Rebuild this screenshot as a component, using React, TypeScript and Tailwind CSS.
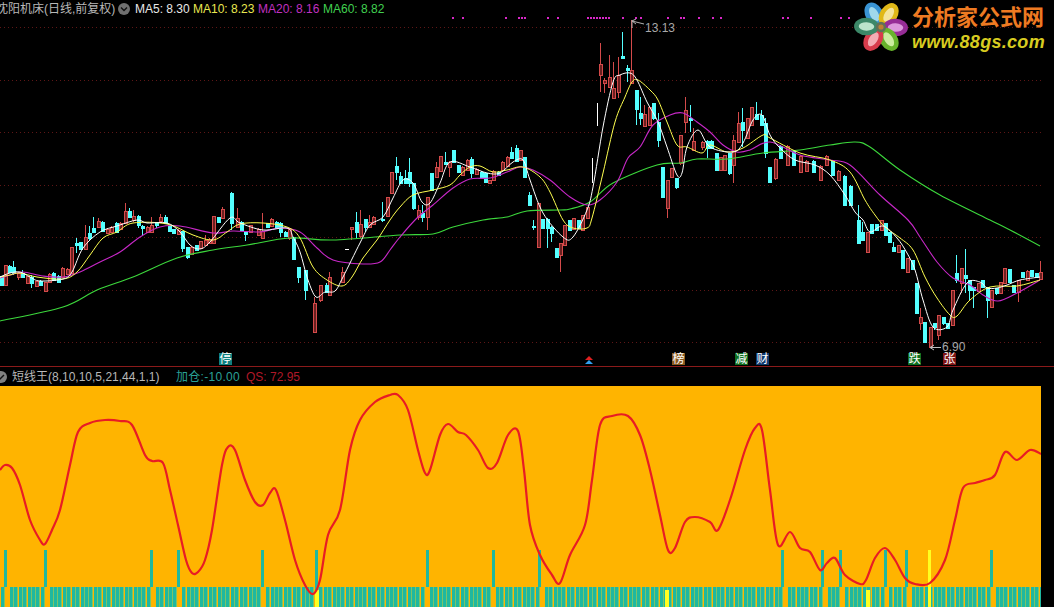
type Pt = [number, number]
type Candle = [number, number, number, number, number]

// catmull-rom through the hand read points, keeps the curves from looking like polylines
const toPath = (pts: Pt[]) => {
  let d = `M${pts[0][0]} ${pts[0][1]}`
  for (let i = 0; i < pts.length - 1; i++) {
    const p0 = pts[i - 1] ?? pts[i]
    const p1 = pts[i]
    const p2 = pts[i + 1]
    const p3 = pts[i + 2] ?? p2
    const c1x = p1[0] + (p2[0] - p0[0]) / 6
    const c1y = p1[1] + (p2[1] - p0[1]) / 6
    const c2x = p2[0] - (p3[0] - p1[0]) / 6
    const c2y = p2[1] - (p3[1] - p1[1]) / 6
    d += ` C${c1x.toFixed(1)} ${c1y.toFixed(1)} ${c2x.toFixed(1)} ${c2y.toFixed(1)} ${p2[0]} ${p2[1]}`
  }
  return d
}

const ma5: Pt[] = [[0,277],[10,273],[20,272],[30,277],[40,281],[63,279],[72,272],[83,248],[100,232],[117,226],[137,220],[147,223],[167,223],[180,232],[190,245],[200,249],[210,242],[230,218],[240,223],[263,230],[287,228],[293,237],[300,252],[308,280],[316,297],[325,292],[335,291],[343,277],[360,243],[370,225],[383,217],[393,198],[403,180],[413,183],[422,202],[430,203],[440,183],[450,162],[470,167],[487,173],[500,173],[513,162],[523,160],[530,180],[543,213],[563,237],[573,237],[587,210],[593,187],[603,127],[613,82],[620,75],[630,73],[637,80],[647,102],[658,122],[667,147],[677,175],[682,173],[687,147],[698,130],[710,147],[733,152],[743,143],[753,120],[762,115],[770,135],[780,148],[795,160],[815,165],[830,175],[845,195],[855,212],[863,220],[870,232],[883,226],[897,238],[907,253],[915,270],[923,300],[933,327],[947,327],[953,310],[967,283],[980,282],[987,288],[997,288],[1007,285],[1020,280],[1040,277]]
const ma10: Pt[] = [[0,277],[10,275],[20,273],[37,277],[63,279],[77,272],[90,255],[103,238],[117,232],[133,223],[167,224],[193,235],[213,240],[227,232],[240,224],[263,223],[287,227],[300,238],[313,267],[327,280],[342,286],[352,277],[363,258],[377,240],[390,220],[400,207],[413,195],[433,190],[450,185],[460,175],[470,167],[480,166],[493,172],[507,170],[523,167],[540,177],[550,192],[563,220],[573,228],[587,228],[592,218],[603,173],[615,122],[625,97],[632,82],[638,80],[650,90],[658,100],[667,122],[677,145],[687,147],[702,153],[710,145],[727,152],[743,148],[763,135],[770,138],[800,153],[830,160],[850,172],[865,200],[875,215],[885,227],[900,238],[913,250],[925,277],[937,298],[950,315],[957,316],[970,300],[990,287],[1017,286],[1040,280]]
const ma20: Pt[] = [[0,278],[10,275],[23,272],[43,276],[63,277],[80,272],[100,262],[120,252],[140,237],[160,227],[180,226],[213,233],[233,231],[260,232],[280,228],[300,232],[317,248],[333,260],[363,264],[380,262],[390,250],[400,237],[417,218],[433,205],[453,188],[470,179],[490,178],[507,172],[520,167],[533,170],[550,180],[570,197],[587,205],[600,200],[617,182],[628,158],[640,147],[653,125],[670,115],[683,113],[697,122],[710,132],[723,145],[737,152],[750,150],[770,142],[800,155],[830,160],[850,165],[880,195],[908,220],[920,237],[937,262],[953,278],[970,285],[983,295],[998,301],[1017,293],[1040,280]]
const ma60: Pt[] = [[0,321],[63,307],[97,290],[133,277],[177,258],[213,250],[247,245],[290,238],[333,240],[400,235],[433,234],[453,227],[483,220],[507,217],[527,211],[560,210],[570,209],[590,202],[613,183],[657,165],[680,163],[697,159],[727,159],[763,153],[800,150],[830,145],[855,142],[870,147],[900,170],[940,195],[990,220],[1010,230],[1040,246]]

// x, high, body top, body bottom, low
const redCandles: Candle[] = [[5,265,265,285,285],[18,272,273,277,280],[27,276,276,283,284],[36,281,281,286,286],[45,282,282,291,292],[49,273,274,282,283],[62,267,268,277,278],[67,268,269,274,275],[71,247,247,273,274],[85,225,237,249,250],[98,218,221,227,228],[107,228,229,233,234],[111,226,227,232,233],[120,222,223,229,230],[125,203,211,223,224],[133,210,216,220,222],[147,226,227,232,233],[151,217,225,232,233],[160,214,217,221,222],[178,229,230,234,235],[191,246,247,254,255],[200,241,241,248,249],[205,235,240,245,246],[209,238,239,243,244],[213,216,216,243,244],[222,207,209,218,219],[237,208,218,227,228],[250,225,225,232,233],[258,228,229,235,236],[262,213,231,238,239],[271,218,219,226,227],[289,228,229,238,240],[314,297,303,332,332],[320,285,285,300,302],[329,272,277,295,296],[342,267,272,282,283],[351,227,227,229,240],[360,210,224,236,238],[369,215,222,227,228],[373,216,217,224,225],[387,197,197,216,217],[391,172,172,193,194],[418,205,210,217,220],[427,197,197,217,230],[436,162,167,177,178],[440,156,156,171,172],[449,161,162,167,177],[462,166,167,175,176],[467,159,160,170,171],[476,168,169,174,175],[489,180,180,183,184],[493,170,171,180,181],[502,161,162,170,171],[507,156,157,166,167],[520,150,150,160,161],[538,203,203,247,248],[560,243,243,255,272],[564,225,225,245,246],[573,218,218,229,230],[582,215,215,230,231],[587,207,207,218,219],[600,43,64,75,92],[604,78,80,83,93],[609,55,77,87,88],[613,62,88,98,99],[618,57,75,92,98],[631,20,70,83,84],[644,105,114,126,127],[649,107,107,125,126],[667,180,180,208,218],[671,168,168,177,178],[680,135,135,163,165],[685,97,110,122,133],[693,128,141,150,151],[702,141,142,147,150],[720,157,157,170,171],[724,155,155,170,171],[733,135,140,165,183],[738,112,123,142,143],[747,118,118,138,139],[751,107,107,125,126],[775,158,159,178,180],[787,145,146,165,166],[800,155,156,172,173],[806,160,161,171,172],[820,165,166,180,181],[826,155,156,165,166],[838,170,171,180,181],[867,232,232,252,253],[881,220,220,230,231],[898,245,245,252,253],[907,258,258,272,273],[920,308,317,323,330],[930,327,327,347,348],[938,315,315,335,340],[952,290,290,325,326],[961,268,268,283,293],[978,283,283,291,292],[991,290,290,307,308],[1000,282,282,293,294],[1004,268,268,283,284],[1018,280,280,292,302],[1027,270,271,280,281],[1040,261,272,279,280]]
const cyanCandles: Candle[] = [[1,276,276,285,286],[9,265,266,272,273],[13,261,267,273,275],[22,270,273,277,278],[31,275,277,283,288],[40,280,281,285,286],[53,272,273,280,281],[58,275,276,282,283],[76,238,243,245,253],[80,242,242,249,250],[89,226,233,238,240],[93,217,228,232,232],[102,221,222,231,232],[116,222,223,232,233],[129,208,211,217,218],[138,215,216,225,228],[142,225,226,228,236],[156,222,222,225,228],[165,215,217,223,224],[169,226,226,231,232],[173,229,229,233,234],[182,231,231,248,252],[187,247,247,257,259],[196,245,245,250,251],[218,217,217,222,223],[231,192,193,223,230],[241,221,222,230,231],[245,231,231,234,241],[267,223,223,227,228],[276,221,222,228,229],[280,222,223,232,237],[285,231,232,236,237],[293,237,237,259,260],[298,267,267,277,283],[305,270,270,290,300],[326,283,285,292,293],[356,212,222,232,238],[365,219,219,227,232],[382,202,219,220,222],[396,157,166,172,180],[400,172,176,183,184],[405,170,178,183,184],[409,158,172,183,187],[413,183,183,208,210],[422,205,213,217,222],[431,173,173,190,191],[445,152,162,164,165],[453,150,150,162,163],[458,165,165,172,173],[471,157,159,173,178],[481,171,172,178,179],[485,173,173,182,183],[498,171,172,175,176],[511,147,152,158,159],[516,145,148,161,162],[524,157,157,177,178],[529,192,195,205,206],[533,220,226,227,230],[542,219,219,228,229],[547,218,219,228,248],[551,226,227,233,242],[556,248,248,257,258],[569,220,220,230,231],[578,220,220,228,229],[622,32,56,58,59],[627,65,68,70,82],[636,90,90,109,125],[640,97,113,118,125],[653,103,103,118,120],[658,113,122,140,147],[662,167,167,197,198],[676,178,178,187,189],[690,105,118,120,132],[707,140,141,148,158],[711,140,141,148,149],[716,153,153,170,171],[729,153,153,173,175],[742,108,122,130,147],[756,102,114,119,120],[761,110,115,125,126],[765,118,123,153,158],[769,167,167,182,183],[780,145,146,158,159],[793,150,151,165,166],[813,160,161,172,173],[832,160,161,175,176],[844,175,176,205,206],[850,185,186,205,206],[858,205,220,243,244],[862,222,232,240,241],[871,224,224,233,234],[876,224,224,230,231],[885,223,223,235,236],[889,232,232,242,243],[893,242,247,251,252],[902,250,250,268,269],[912,260,260,269,270],[916,283,283,313,314],[924,322,322,342,343],[934,323,323,327,330],[943,317,317,323,325],[947,323,323,328,329],[956,255,273,280,283],[965,249,275,278,293],[969,280,280,290,300],[973,287,287,290,308],[982,280,280,287,288],[987,287,287,300,318],[996,288,288,293,295],[1009,269,269,282,283],[1013,285,285,292,293],[1022,272,272,277,278],[1031,270,270,276,277],[1036,273,273,277,278]]

const qsCurve: Pt[] = [[0,470],[5,465],[12,468],[20,485],[30,520],[40,540],[45,544],[52,530],[60,510],[70,465],[78,432],[90,423],[105,420],[120,421],[132,425],[145,455],[152,461],[163,463],[170,490],[178,525],[186,560],[192,573],[198,572],[205,560],[212,530],[222,465],[228,447],[235,450],[245,480],[255,502],[263,505],[270,493],[276,490],[285,520],[295,560],[305,585],[313,594],[320,580],[328,535],[340,510],[350,450],[360,420],[375,402],[390,395],[398,395],[408,410],[418,450],[425,473],[430,470],[440,435],[448,424],[458,432],[466,435],[478,450],[488,468],[497,463],[508,435],[518,431],[524,470],[530,525],[540,555],[552,575],[560,583],[570,555],[585,525],[592,480],[600,425],[612,416],[628,416],[640,435],[650,470],[660,515],[668,550],[675,548],[685,522],[695,517],[710,522],[718,530],[730,500],[745,450],[755,428],[762,430],[770,490],[778,545],[790,532],[800,548],[810,552],[820,570],[827,563],[835,558],[845,575],[860,584],[866,580],[875,558],[885,548],[895,560],[905,578],[915,584],[930,583],[945,560],[955,520],[963,488],[975,483],[985,480],[995,475],[1005,452],[1017,460],[1030,450],[1041,454]]

const gridLines = [27, 80, 132, 185, 237, 290, 342]
const signalDots = [452, 462, 505, 518, 521, 524, 547, 557, 587, 590, 593, 596, 599, 602, 605, 608, 622, 635, 640, 667, 680, 683, 698, 712, 720, 782, 787, 810, 840, 848]
const tallBars = [5, 45, 151, 178, 262, 316, 427, 493, 539, 782, 822, 840, 885, 906, 991]
const yellowBars = [316, 666, 867]
const shortBars = Array.from({ length: 236 }, (_, i) => Math.round(1 + i * 4.42)).filter(
  (x) => !tallBars.some((g) => g !== 316 && Math.abs(g - x) < 3),
)

function CandleMark({ c, color, fill }: { c: Candle; color: string; fill: string }) {
  const [x, hi, top, bot, lo] = c
  return (
    <g>
      <line x1={x + 0.5} x2={x + 0.5} y1={hi} y2={lo} stroke={color} />
      <rect
        x={x - 1}
        y={top + 0.5}
        width={3}
        height={Math.max(bot - top, 1)}
        fill={fill}
        stroke={color}
        shapeRendering="crispEdges"
      />
    </g>
  )
}

function PriceChart() {
  return (
    <svg width={1054} height={366} viewBox="0 0 1054 366" className="block">
      {gridLines.map((y) => (
        <line key={y} x1={0} x2={1041} y1={y + 0.5} y2={y + 0.5} stroke="#5e1616" strokeDasharray="1 3" />
      ))}
      {signalDots.map((x) => (
        <rect key={x} x={x} y={17} width={2} height={2} fill="#d828c8" />
      ))}
      {redCandles.map((c) => (
        <CandleMark key={c[0]} c={c} color="#d44a4a" fill="#6a2020" />
      ))}
      {cyanCandles.map((c) => (
        <CandleMark key={c[0]} c={c} color="#54ffff" fill="#54ffff" />
      ))}
      <line x1={597.5} x2={597.5} y1={103} y2={126} stroke="#fff" />
      <line x1={592.5} x2={592.5} y1={158} y2={183} stroke="#fff" />
      <line x1={345} x2={349} y1={249.5} y2={249.5} stroke="#fff" />
      <path d={toPath(ma60)} fill="none" stroke="#3cd83c" strokeWidth={1.1} />
      <path d={toPath(ma20)} fill="none" stroke="#c828c8" strokeWidth={1.1} />
      <path d={toPath(ma10)} fill="none" stroke="#ffff50" strokeWidth={1} />
      <path d={toPath(ma5)} fill="none" stroke="#ffffff" strokeWidth={1} />
      <path d="M632 20 L632 28 M632 21 L644 24 M632 21 L636 19 M632 21 L636 24" fill="none" stroke="#b0b0b0" />
      <path d="M930 347.5 H941 M930 347.5 L934 345 M930 347.5 L934 350" fill="none" stroke="#c0c0c0" />
      <path d="M589 356 L593 360 H585 Z" fill="#e02020" />
      <path d="M589 360 L593 364 H585 Z" fill="#30a0f0" />
    </svg>
  )
}

function Logo() {
  const petals = [
    { a: -28, c: "#3a94d4", i: "#a0d8ec" },
    { a: 32, c: "#e0b818", i: "#f4e49c" },
    { a: 92, c: "#962c96", i: "#dc98dc" },
    { a: 148, c: "#68b42c", i: "#cceca0" },
    { a: 212, c: "#d83c4c", i: "#f4acb4" },
    { a: 272, c: "#3c8868", i: "#bce4cc" },
  ]
  return (
    <div className="absolute left-[853px] top-[1px] flex items-center gap-[3px]">
      <svg width={56} height={52} viewBox="-27 -25 54 50">
        {petals.map((p) => (
          <g key={p.a} transform={`rotate(${p.a})`}>
            <ellipse cx={0} cy={-14} rx={8.5} ry={12} fill={p.c} />
            <ellipse cx={0} cy={-14} rx={4} ry={7.5} fill={p.i} />
          </g>
        ))}
        <circle r={5} fill="#607058" />
        <circle r={2.5} fill="#c08030" />
      </svg>
      <div className="flex flex-col gap-[2px] mt-[1px]">
        <span className="text-[22px] leading-[26px] font-bold text-[#ee7a22] whitespace-nowrap">分析家公式网</span>
        <span className="text-[18px] leading-[18px] font-bold italic tracking-[0.3px] text-[#d8cc20] whitespace-nowrap">
          www.88gs.com
        </span>
      </div>
    </div>
  )
}

function Badge({ text, bg, left }: { text: string; bg: string; left: string }) {
  return (
    <span
      className={`absolute top-[353px] h-[12px] w-[13px] flex items-center justify-center text-[12px] leading-none text-white ${bg} ${left}`}
    >
      {text}
    </span>
  )
}

function IndicatorChart() {
  return (
    <svg width={1041} height={221} viewBox="0 386 1041 221" className="block bg-[#ffb400]">
      {shortBars.map((x) => (
        <g key={x} shapeRendering="crispEdges">
          <rect x={x} y={587} width={4.4} height={20} fill="#7cc468" />
          <rect x={x} y={587} width={3} height={20} fill="#1fb8a0" />
        </g>
      ))}
      {tallBars.map((x) => (
        <rect key={x} x={x - 1} y={550} width={3} height={37} fill="#1fb8a0" shapeRendering="crispEdges" />
      ))}
      {yellowBars.map((x) => (
        <rect key={x} x={x - 1} y={590} width={4} height={17} fill="#ffff20" shapeRendering="crispEdges" />
      ))}
      <rect x={928} y={550} width={3} height={57} fill="#ffff20" shapeRendering="crispEdges" />
      <path d={toPath(qsCurve)} fill="none" stroke="#e81c24" strokeWidth={2.2} strokeLinejoin="round" />
    </svg>
  )
}

export default function App() {
  return (
    <div className="w-[1054px] h-[607px] bg-black overflow-hidden flex flex-col font-['Liberation_Sans','Noto_Sans_CJK_SC',sans-serif] text-[12px]">
      <div className="relative h-[366px] shrink-0 overflow-hidden">
        <PriceChart />
        <div className="absolute left-0 top-[1px] h-[16px] flex items-center whitespace-nowrap">
          <span className="w-[118px] ml-[-4px] text-[#b8b8b8]">沈阳机床(日线,前复权)</span>
          <span className="ml-[4px] w-[12px] h-[12px] rounded-full bg-[#707070] flex items-center justify-center">
            <svg width={8} height={6} viewBox="0 0 8 6">
              <path d="M1 1.5 L4 4.5 L7 1.5" fill="none" stroke="#111" strokeWidth={1.4} />
            </svg>
          </span>
          <span className="ml-[5px] w-[58px] text-[#e8e8e8]">MA5: 8.30</span>
          <span className="w-[65px] text-[#e8e850]">MA10: 8.23</span>
          <span className="w-[65px] text-[#c030c0]">MA20: 8.16</span>
          <span className="text-[#40d050]">MA60: 8.82</span>
        </div>
        <span className="absolute left-[645px] top-[19px] text-[#a8a8a8]">13.13</span>
        <span className="absolute left-[942px] top-[342px] h-[10px] leading-[10px] text-[#a8a8a8]">6.90</span>
        <Logo />
        <Badge text="停" bg="bg-[#0f7f7f]" left="left-[219px]" />
        <Badge text="榜" bg="bg-[#8a5a1f]" left="left-[672px]" />
        <Badge text="减" bg="bg-[#0f6f1f]" left="left-[735px]" />
        <Badge text="财" bg="bg-[#103a6f]" left="left-[756px]" />
        <Badge text="跌" bg="bg-[#0f6f1f]" left="left-[908px]" />
        <Badge text="张" bg="bg-[#7f1515]" left="left-[943px]" />
      </div>
      <div className="h-[20px] shrink-0 border-t border-[#8b1a1a] flex items-center whitespace-nowrap">
        <span className="ml-[-5px] w-[12px] h-[12px] rounded-full bg-[#808080] flex items-center justify-center">
          <svg width={8} height={6} viewBox="0 0 8 6">
            <path d="M1 3 L3 5 L7 1" fill="none" stroke="#111" strokeWidth={1.4} />
          </svg>
        </span>
        <span className="ml-[5px] w-[164px] text-[#b8b8b8]">短线王(8,10,10,5,21,44,1,1)</span>
        <span className="w-[70px] tracking-[0.3px] text-[#2aa198]">加仓:-10.00</span>
        <span className="text-[#b01828]">QS: 72.95</span>
      </div>
      <div className="flex flex-1">
        <IndicatorChart />
        <div className="flex-1 bg-black" />
      </div>
    </div>
  )
}
